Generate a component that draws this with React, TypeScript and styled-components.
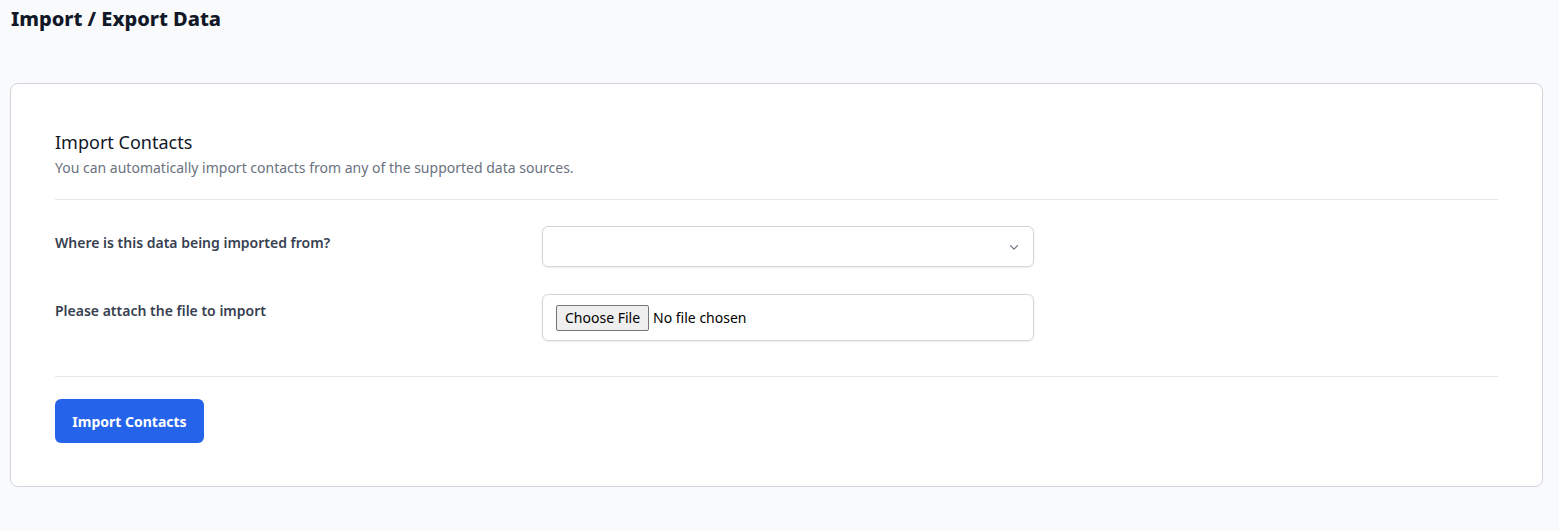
import React from "react";
import styled, { createGlobalStyle } from "styled-components";

const Global = createGlobalStyle`
  html, body { margin: 0; background: #f9fafb; font-family: "Noto Sans", "Open Sans", sans-serif; color: #111827; }
`;

const Page = styled.div`
  padding: 4px 16px 38px 10px;
`;
const Title = styled.h1`
  margin: 0 0 49px 1px;
  font-size: 20px;
  font-weight: 800;
  line-height: 30px;
  color: #111827;
`;
const Card = styled.div`
  background: #fff;
  border: 1px solid #d1d5db;
  border-radius: 8px;
  padding: 44px 44px 43px 44px;
`;
const Heading = styled.h2`
  margin: 0;
  font-size: 18px;
  font-weight: 400;
  line-height: 28px;
  color: #111827;
`;
const Sub = styled.p`
  margin: 2px 0 0;
  font-size: 14px;
  line-height: 20px;
  color: #6b7280;
`;
const Divider = styled.hr`
  border: 0;
  border-top: 1px solid #e5e7eb;
  margin: ${(p: { $top: number; $bottom: number }) => `${p.$top}px 0 ${p.$bottom}px`};
`;
const Row = styled.div`
  display: grid;
  grid-template-columns: 487px 492px;
  align-items: start;
  margin-bottom: ${(p: { $mb: number }) => p.$mb}px;
`;
const Label = styled.label`
  font-size: 14px;
  font-weight: 600;
  color: #374151;
  line-height: 20px;
  padding-top: ${(p: { $pt: number }) => p.$pt}px;
`;
const SelectBox = styled.div`
  height: 39px;
  border: 1px solid #d1d5db;
  border-radius: 6px;
  box-shadow: 0 1px 2px rgba(0,0,0,0.08);
  display: flex;
  align-items: center;
  justify-content: flex-end;
  padding-right: 12px;
  color: #6b7280;
`;
const FileBox = styled.div`
  height: 45px;
  border: 1px solid #d1d5db;
  border-radius: 6px;
  box-shadow: 0 1px 2px rgba(0,0,0,0.08);
  display: flex;
  align-items: center;
  padding-left: 13px;
  font-family: "Noto Sans", sans-serif;
  font-size: 14px;
  color: #000;
`;
const FileBtn = styled.span`
  border: 1px solid #767676;
  background: #efefef;
  border-radius: 2px;
  padding: 2px 8px;
  margin-right: 4px;
  line-height: 20px;
  color: #000;
`;
const Button = styled.button`
  background: #2563eb;
  color: #fff;
  border: 0;
  border-radius: 6px;
  height: 44px;
  width: 149px;
  font-family: inherit;
  font-size: 14px;
  font-weight: 700;
`;

export default function App() {
  return (
    <>
      <Global />
      <Page>
        <Title>Import / Export Data</Title>
        <Card>
          <Heading>Import Contacts</Heading>
          <Sub>You can automatically import contacts from any of the supported data sources.</Sub>
          <Divider $top={21} $bottom={26} />
          <Row $mb={27}>
            <Label $pt={7}>Where is this data being imported from?</Label>
            <SelectBox>
              <svg width="14" height="14" viewBox="0 0 20 20" fill="none" stroke="#6b7280" strokeWidth="1.8">
                <path d="M5 8l5 5 5-5" strokeLinecap="round" strokeLinejoin="round" />
              </svg>
            </SelectBox>
          </Row>
          <Row $mb={0}>
            <Label $pt={7}>Please attach the file to import</Label>
            <FileBox>
              <FileBtn>Choose File</FileBtn>No file chosen
            </FileBox>
          </Row>
          <Divider $top={35} $bottom={22} />
          <Button>Import Contacts</Button>
        </Card>
      </Page>
    </>
  );
}
